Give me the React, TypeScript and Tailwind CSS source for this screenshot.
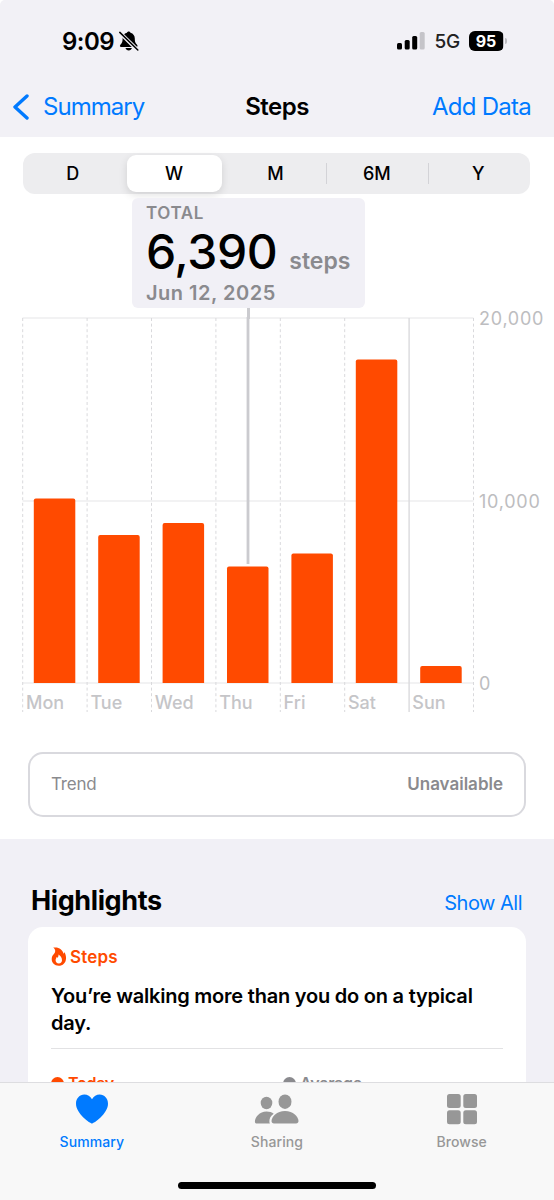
import clsx from 'clsx';

const CHART_HEIGHT = 365;
const DAY_WIDTH = 64.4;

const ranges = ['D', 'W', 'M', '6M', 'Y'];

const days = [
  { label: 'Mon', height: 184.5 },
  { label: 'Tue', height: 148 },
  { label: 'Wed', height: 160 },
  { label: 'Thu', height: 116.5 },
  { label: 'Fri', height: 129.5 },
  { label: 'Sat', height: 323.5 },
  { label: 'Sun', height: 17 },
];

function StatusBar() {
  return (
    <div className="flex h-[82px] items-center justify-between pl-[62px] pr-[47px]">
      <div className="flex items-center gap-[5px]">
        <span className="pt-[2px] text-[24px] font-semibold leading-none tracking-[-0.5px]">9:09</span>
        <svg width="20" height="20" viewBox="0 0 20 20" aria-hidden="true">
          <path
            d="M9.700.4c-.9 0-1.600.6-1.800 1.400C5 2.600 3.600 4.900 3.600 7.600c0 3.800-.9 4.900-2.300 6.300-.8.8-.4 2 .8 2h15.300c1.100 0 1.500-1.200.8-2-1.500-1.400-2.400-2.500-2.400-6.300 0-2.700-1.500-5-4.300-5.800C11.300 1 10.600.4 9.700.4zM6.500 17.100h6.400c-.4 1.400-1.600 2.300-3.200 2.300s-2.800-.9-3.200-2.300z"
            fill="#000"
          />
          <path d="M.3 1.200 18.800 19.300" stroke="#f2f1f6" strokeWidth="3.800" />
          <path d="M.8 1.400 18.800 19" stroke="#000" strokeWidth="1.500" strokeLinecap="round" />
        </svg>
      </div>
      <div className="flex items-center">
        <svg width="28" height="18" viewBox="0 0 28 18" aria-hidden="true">
          <rect x="0" y="11" width="5" height="6.500" rx="1.500" />
          <rect x="7.700" y="8" width="5" height="9.500" rx="1.500" />
          <rect x="15.200" y="4" width="5" height="13.500" rx="1.500" />
          <rect x="22.700" y="0" width="5" height="17.500" rx="1.500" fill="#c5c4c9" />
        </svg>
        <span className="ml-[9px] pt-[1px] text-[19px] font-medium leading-none tracking-[-0.2px] text-[#222]">5G</span>
        <div className="ml-[9px] flex h-[20px] w-[35px] overflow-hidden rounded-[6px] bg-[#bdbcc1]">
          <div className="flex h-full w-[34px] items-center justify-center bg-black text-[16px] font-bold leading-none text-white">
            95
          </div>
        </div>
        <div className="ml-[1px] h-[6px] w-[2px] rounded-r-full bg-[#bdbcc1]" />
      </div>
    </div>
  );
}

function NavBar() {
  return (
    <nav className="grid h-[55px] grid-cols-3 items-center pb-[6px] pl-[13px] pr-[23px] text-[24px] leading-none text-[#007aff]">
      <a className="flex items-center gap-[14px] tracking-[-0.95px]">
        <svg width="16" height="26" viewBox="0 0 16 26" fill="none" aria-hidden="true">
          <path d="M14 2 2 13l12 11" stroke="currentColor" strokeWidth="3.400" strokeLinecap="round" strokeLinejoin="round" />
        </svg>
        <span className="pt-[1px]">Summary</span>
      </a>
      <h1 className="pl-[10px] pt-[1px] text-center font-semibold tracking-[-0.5px] text-black">Steps</h1>
      <a className="pt-[1px] text-right tracking-[-0.75px]">Add Data</a>
    </nav>
  );
}

function RangePicker() {
  return (
    <div className="mr-[24px] ml-[23px] flex h-[41px] rounded-[12px] bg-[#ededef]">
      {ranges.map((range, i) => (
        <div key={range} className="relative flex flex-1 items-center justify-center py-[2px] pr-[2px]">
          {i > 2 && <span className="absolute -left-px top-[10px] h-[21px] w-px bg-[#d3d3d7]" />}
          <span
            className={clsx(
              'flex h-full w-[95px] items-center justify-center text-[18px] font-medium leading-none',
              range === 'W' && 'rounded-[9px] bg-white shadow-[0_3px_8px_rgba(0,0,0,0.12)]'
            )}
          >
            {range}
          </span>
        </div>
      ))}
    </div>
  );
}

function Callout() {
  return (
    <div className="absolute left-[132px] top-[4px] h-[110px] w-[233px] rounded-[6px] bg-[#f1f0f6] pl-[14px] pt-[5px] font-semibold text-[#8a8a8e]">
      <p className="text-[17px] leading-[20px] tracking-[0.6px]">TOTAL</p>
      <p className="flex h-[58px] items-baseline gap-[12px] leading-[58px]">
        <span className="text-[48px] font-medium tracking-[-0.4px] text-black">6,390</span>
        <span className="text-[23px]">steps</span>
      </p>
      <p className="text-[20px] leading-[24px] tracking-[0.5px]">Jun 12, 2025</p>
    </div>
  );
}

function StepsChart() {
  return (
    <div className="relative h-[558px] pt-[123px]">
      <div className="flex pl-[22px]">
        <div className="w-[453px]">
          <svg width="453" height="396" viewBox="0 0 453 396" className="block" aria-hidden="true">
            {[1, 184, 366].map((y) => (
              <path key={y} d={`M.5 ${y}H451.500`} stroke="#e5e5e8" strokeWidth="1.200" />
            ))}
            {Array.from({ length: 8 }, (_, i) => (
              <path
                key={i}
                d={`M${0.7 + i * DAY_WIDTH} 1V395`}
                stroke={i === 6 ? '#dadadd' : '#d9d9dc'}
                strokeWidth={i === 6 ? 1.4 : 1}
                strokeDasharray={i === 6 ? undefined : '3 2.6'}
              />
            ))}
            <path d="M226 0V247" stroke="#cbcbcf" strokeWidth="2.800" />
            {days.map((day, i) => {
              const x = 11.8 + i * DAY_WIDTH;
              const top = CHART_HEIGHT + 1 - day.height;
              return (
                <path
                  key={day.label}
                  d={`M${x} 366V${top + 2}q0-2 2-2h37.500q2 0 2 2V366z`}
                  fill="#ff4a00"
                />
              );
            })}
          </svg>
          <div className="-mt-[21px] flex text-[18px] font-medium leading-[22px] text-[#c5c5c8]">
            {days.map((day) => (
              <span key={day.label} className="w-[64.4px] pl-[4px]">
                {day.label}
              </span>
            ))}
          </div>
        </div>
        <div className="flex h-[387px] -translate-y-[9px] flex-col justify-between pl-[4px] text-[18px] leading-[22px] tracking-[0.75px] text-[#bdbdc0]">
          <span>20,000</span>
          <span>10,000</span>
          <span>0</span>
        </div>
      </div>
      <Callout />
      <div className="absolute left-[247px] top-[114px] h-[11px] w-[3px] bg-[#cbcbcf]" />
    </div>
  );
}

function Highlights() {
  return (
    <section className="h-[361px] overflow-hidden bg-[#f1f0f6] px-[28px] pt-[44px]">
      <header className="flex h-[44px] items-start justify-between pl-[3px] pr-[4px]">
        <h2 className="pt-[1px] text-[27px] font-bold leading-[34px] tracking-[-0.4px]">Highlights</h2>
        <a className="pt-[5px] text-[20px] leading-[30px] tracking-[-0.5px] text-[#007aff]">Show All</a>
      </header>
      <article className="h-[300px] rounded-[15px] bg-white px-[23px] pt-[18px]">
        <div className="flex h-[23px] items-center gap-[3px] text-[#ff4a00]">
          <svg width="16" height="19" viewBox="0 0 16 19" aria-hidden="true">
            <path
              d="M2.200.6C7.500-.4 11.500 2.300 12.600 6.800c.5-.5.7-1 .7-1.700 1.200 1.800 1.900 4.100 1.700 6.600-.3 4.300-3.100 7-7.300 7C3.500 18.700.7 15.900.7 12c0-2.600 1.300-4 2.400-5.200C4.700 5 4.700 2.500 2.200.6z"
              fill="currentColor"
            />
            <path
              d="M7.300 7.600c.6 1.600-.2 2.300-1 3.300-.2-.4-.5-.7-.8-.9.1 1-.9 1.800-.9 3.300 0 1.900 1.300 3.200 3.200 3.200s3.200-1.300 3.200-3.200c0-2.600-1.600-4.800-3.700-5.700z"
              fill="#fff"
            />
          </svg>
          <span className="text-[17px] font-semibold leading-[22px] tracking-[0.2px]">Steps</span>
        </div>
        <p className="mt-[14px] border-b border-[#e2e2e4] pb-[11px] pt-[1px] text-[20px] font-semibold leading-[27px] tracking-[-0.22px]">
          You’re walking more than you do on a typical day.
        </p>
        <div className="grid grid-cols-2 pt-[24px] text-[16px] font-semibold leading-[20px]">
          <span className="flex items-center gap-[4px] text-[#ff4a00]">
            <i className="size-[13px] rounded-full bg-current" />
            <span className="tracking-[-0.3px]">Today</span>
          </span>
          <span className="flex items-center gap-[4px] pl-[6px] text-[#8a8a8e]">
            <i className="size-[13px] rounded-full bg-current" />
            <span className="tracking-[-0.3px]">Average</span>
          </span>
        </div>
      </article>
    </section>
  );
}

function TabBar() {
  return (
    <footer className="fixed inset-x-0 bottom-0 h-[118px] border-t border-[#dddde0] bg-[#f8f8f8] text-[14px] font-medium leading-[18px] tracking-[0.1px] text-[#979797]">
      <div className="grid grid-cols-3 pt-[9px]">
        <div className="flex flex-col items-center gap-[7px] pr-[1px] text-[#007aff]">
          <svg width="34" height="34" viewBox="0 0 34 34" aria-hidden="true">
            <path
              d="M17 31.500C15.500 31.500 1 21.800 1 11.700 1 6.500 4.600 2.500 9.300 2.500c3.200 0 6 1.700 7.700 4.800 1.700-3.100 4.500-4.800 7.700-4.800 4.700 0 8.300 4 8.300 9.200C33 21.800 18.500 31.500 17 31.500z"
              fill="currentColor"
            />
          </svg>
          Summary
        </div>
        <div className="flex flex-col items-center gap-[7px]">
          <svg width="46" height="34" viewBox="0 0 46 34" fill="currentColor" aria-hidden="true">
            <ellipse cx="12.500" cy="11" rx="5.800" ry="6.200" />
            <path d="M2.800 31.500c-1.200 0-1.900-.7-1.900-1.800 0-4.300 4.600-10.200 11.600-10.200 3.100 0 5.500.9 7.200 2.300-3.200 2.300-4.300 4.800-4.300 7.400 0 .9.100 1.600.5 2.300z" />
            <ellipse cx="31" cy="9.700" rx="6.500" ry="7.200" />
            <path d="M31 19c-8.200 0-13.500 6-13.500 10.100 0 1.600.9 2.400 2.500 2.400h22c1.600 0 2.500-.8 2.500-2.400C44.500 25 39.200 19 31 19z" />
          </svg>
          Sharing
        </div>
        <div className="flex flex-col items-center gap-[7px]">
          <svg width="30" height="34" viewBox="0 0 30 34" fill="currentColor" aria-hidden="true">
            <rect x="0" y="2" width="13.700" height="14" rx="2.500" />
            <rect x="16.300" y="2" width="13.700" height="14" rx="2.500" />
            <rect x="0" y="18.200" width="13.700" height="14" rx="2.500" />
            <rect x="16.300" y="18.200" width="13.700" height="14" rx="2.500" />
          </svg>
          Browse
        </div>
      </div>
      <div className="mx-auto mt-[31px] h-[7px] w-[198px] rounded-full bg-black" />
    </footer>
  );
}

export default function App() {
  return (
    <main className="h-[1200px] w-[554px] overflow-hidden bg-white font-['Inter',sans-serif] text-black">
      <div className="h-[137px] rounded-t-[5px] bg-[#f2f1f6]">
        <StatusBar />
        <NavBar />
      </div>
      <div className="pt-[16px]">
        <RangePicker />
      </div>
      <StepsChart />
      <div className="mx-[28px] flex h-[65px] items-center justify-between rounded-[15px] border-2 border-[#d9d9de] px-[21px] text-[17px] leading-none text-[#8a8a8e]">
        <span className="tracking-[-0.2px]">Trend</span>
        <span className="font-semibold">Unavailable</span>
      </div>
      <div className="h-[22px]" />
      <Highlights />
      <TabBar />
    </main>
  );
}
